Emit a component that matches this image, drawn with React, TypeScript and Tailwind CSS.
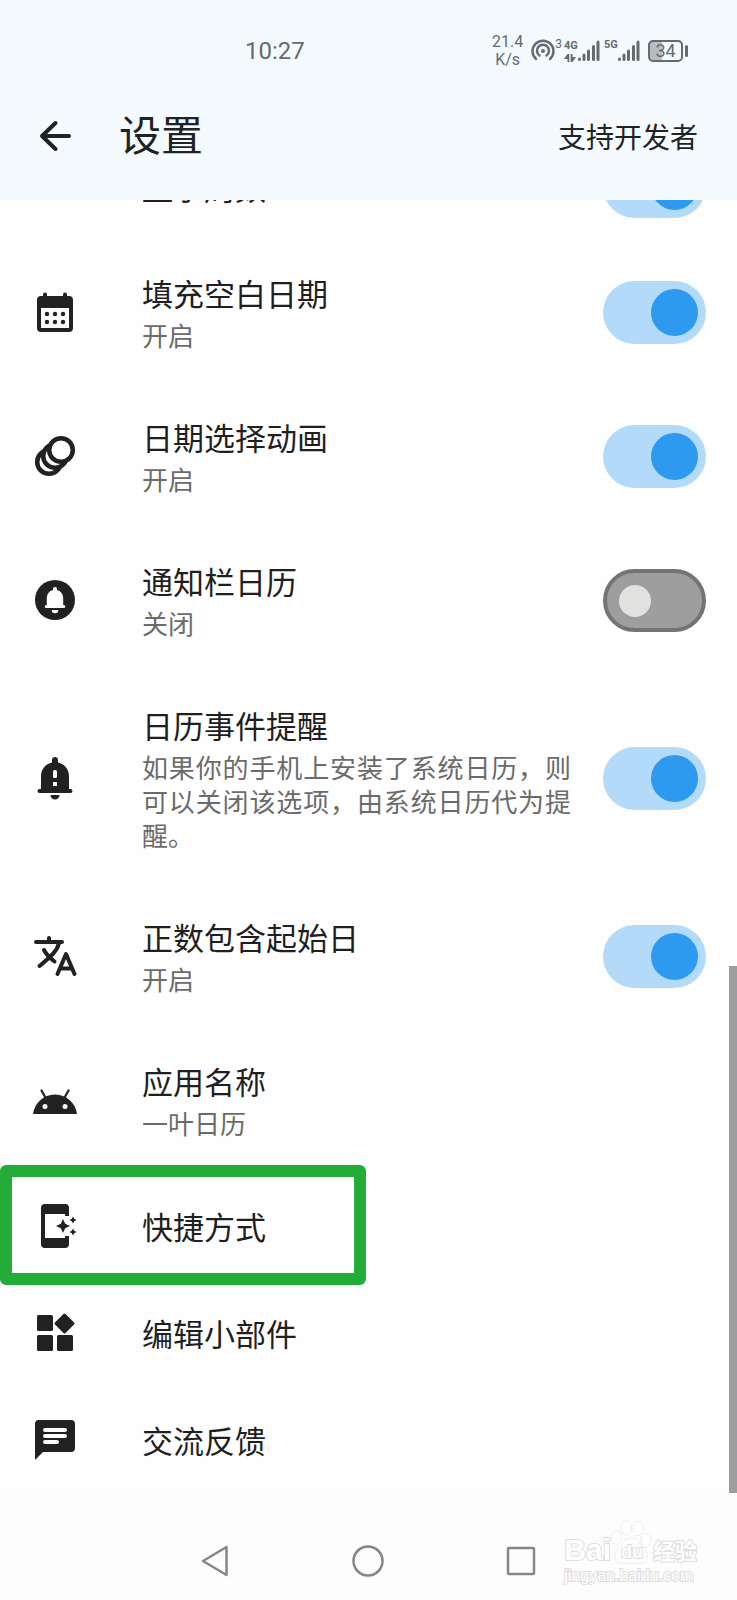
import type { ReactNode } from "react"

const Icon = ({ children }: { children: ReactNode }) => (
    <svg viewBox="0 0 48 48" className="size-12 shrink-0" fill="#212121" aria-hidden="true">{children}</svg>
)

const CalendarIcon = () => <Icon>
    <rect x="6" y="8" width="36" height="36" rx="4" />
    <path d="M14 6.500v4M34 6.500v4" stroke="#212121" strokeWidth="4" strokeLinecap="round" />
    <path d="M10 20h28v20H10z" fill="#fefefe" />
    {[16, 24, 32].map((x) => <g key={x}>
        <circle cx={x} cy="26" r="2.200" />
        <circle cx={x} cy="34" r="2.200" />
    </g>)}
</Icon>

const AnimationIcon = () => <Icon>
    <g fill="#fefefe" stroke="#212121" strokeWidth="4.500">
        <circle cx="18" cy="30" r="11.800" />
        <circle cx="24" cy="24" r="11.800" />
        <circle cx="30" cy="18" r="11.800" />
    </g>
</Icon>

const CircleBellIcon = () => <Icon>
    <circle cx="24" cy="24" r="20" />
    <path fill="#fefefe" d="M24 11c1.200 0 2 .8 2 2v.9c3.800.900 6.200 4.200 6.200 8.300V29h.6a1.500 1.500 0 0 1 0 3H15.200a1.500 1.500 0 0 1 0-3h.6v-6.800c0-4.100 2.400-7.400 6.200-8.300V13c0-1.200.8-2 2-2zM20.700 34h6.600a3.300 3.300 0 0 1-6.600 0z" />
</Icon>

const AlertBellIcon = () => <Icon>
    <path d="M24 3c1.700 0 3 1.300 3 3v2.400c6.500 1.300 11 6.900 11 13.600v13h1.500a2 2 0 0 1 0 4h-31a2 2 0 0 1 0-4H10V22c0-6.700 4.500-12.300 11-13.600V6c0-1.700 1.300-3 3-3zM19.500 41h9a4.500 4.500 0 0 1-9 0z" />
    <rect x="22" y="16" width="4" height="8" rx="1.500" fill="#fefefe" />
    <rect x="22" y="28" width="4" height="4" rx=".5" fill="#fefefe" />
</Icon>

const TranslateIcon = () => <Icon>
    <g fill="none" stroke="#212121" strokeWidth="4" strokeLinecap="round" strokeLinejoin="round">
        <path d="M5 10h26M18 6v4M28 11C26 20 18 26 8.500 34M13 18c2 4 6 8 10.500 11.500" />
        <path d="M26.500 42 35 22l8.500 20M29.500 36.500h11" />
    </g>
</Icon>

const AndroidIcon = () => <Icon>
    <path d="M2 38C3.500 27 12.500 18.500 24 18.500S44.500 27 46 38z" />
    <path d="m10.500 14.500 4.500 8M37.500 14.500l-4.500 8" stroke="#212121" strokeWidth="2.200" strokeLinecap="round" />
    <circle cx="14" cy="30.500" r="2.500" fill="#fefefe" />
    <circle cx="34" cy="30.500" r="2.500" fill="#fefefe" />
</Icon>

const ShortcutIcon = () => <Icon>
    <path d="M14 2h20a4 4 0 0 1 4 4v8h-4v-2H14v24h20v-2h4v8a4 4 0 0 1-4 4H14a4 4 0 0 1-4-4V6a4 4 0 0 1 4-4z" />
    <path d="m32 17 2.200 4.800L39 24l-4.800 2.200L32 31l-2.200-4.800L25 24l4.800-2.200z" />
    <path d="m42 14.500 1.200 2.300 2.300 1.200-2.300 1.200-1.200 2.300-1.200-2.300-2.300-1.200 2.300-1.200zM42 26.500l1.200 2.300 2.300 1.200-2.300 1.200-1.200 2.300-1.200-2.300-2.300-1.200 2.300-1.200z" />
</Icon>

const WidgetsIcon = () => <Icon>
    <rect x="6" y="6" width="16" height="16" rx="1.500" />
    <rect x="6" y="26" width="16" height="16" rx="1.500" />
    <rect x="26" y="26" width="16" height="16" rx="1.500" />
    <rect x="26" y="7" width="15" height="15" rx="1.500" transform="rotate(45 33.500 14.500)" />
</Icon>

const ChatIcon = () => <Icon>
    <path d="M8 4h32a4 4 0 0 1 4 4v24a4 4 0 0 1-4 4H12l-8 8V8a4 4 0 0 1 4-4z" />
    <path d="M14 14h20M14 20h20M14 26h12" stroke="#fefefe" strokeWidth="4" strokeLinecap="round" />
</Icon>

type Setting = { id: string; title: string; note?: string; on?: boolean; icon?: ReactNode; marked?: boolean }

const settings: Setting[] = [
    { id: "weeks", title: "显示周数", on: true },
    { id: "fill", title: "填充空白日期", note: "开启", on: true, icon: <CalendarIcon /> },
    { id: "animation", title: "日期选择动画", note: "开启", on: true, icon: <AnimationIcon /> },
    { id: "notification", title: "通知栏日历", note: "关闭", on: false, icon: <CircleBellIcon /> },
    { id: "reminder", title: "日历事件提醒", note: "如果你的手机上安装了系统日历，则可以关闭该选项，由系统日历代为提醒。", on: true, icon: <AlertBellIcon /> },
    { id: "start", title: "正数包含起始日", note: "开启", on: true, icon: <TranslateIcon /> },
    { id: "name", title: "应用名称", note: "一叶日历", icon: <AndroidIcon /> },
    { id: "shortcut", title: "快捷方式", icon: <ShortcutIcon />, marked: true },
    { id: "widgets", title: "编辑小部件", icon: <WidgetsIcon /> },
    { id: "feedback", title: "交流反馈", icon: <ChatIcon /> },
]

const Switch = ({ id, on }: { id: string; on: boolean }) => (
    <input
        id={id}
        type="checkbox"
        role="switch"
        defaultChecked={on}
        className="block h-[63px] w-[103px] shrink-0 appearance-none overflow-hidden rounded-full border-4 border-[#747477] bg-[#9e9e9e]
        before:mt-3 before:ml-3 before:block before:size-8 before:rounded-full before:bg-[#e1e1df]
        checked:border-0 checked:bg-[#b3dbf9] checked:before:mt-2 checked:before:ml-12 checked:before:size-[47px] checked:before:bg-[#2d9aef]"
    />
)

const Row = ({ id, title, note, on, icon, marked }: Setting) => {
    const size = note ? "py-7" : "h-[107px]"
    const body = <>
        {icon ?? <span className="size-12 shrink-0" />}
        <span className={`ml-[63px] block flex-1 ${note ? "pb-1" : ""}`}>
            <span className="block text-[31px] leading-[50px] text-[#1f1f1f]">{title}</span>
            {note && <span className="block text-justify text-[26px] leading-[34px] text-[#6b6b6b]">{note}</span>}
        </span>
    </>

    return <li className="relative">
        {on === undefined
            ? <button type="button" className={`flex w-full items-center px-[31px] text-left ${size}`}>{body}</button>
            : <div className={`flex items-center gap-8 px-[31px] ${size}`}>
                <label htmlFor={id} className="flex flex-1 items-center">{body}</label>
                <Switch id={id} on={on} />
            </div>}

        {/* Highlight drawn over the row */}
        {marked && <div className="pointer-events-none absolute -top-[7px] left-0 h-[120px] w-[366px] rounded-md border-12 border-[#24ac38]" />}
    </li>
}

const SignalBars = () => (
    <svg viewBox="0 0 22 22" className="h-[22px] w-[22px]" stroke="#666b6e" strokeWidth="3" strokeLinecap="round" aria-hidden="true">
        <path d="M1.500 19v.5M6 15v4.500M10.500 11v8.500M15.500 6.500v13M20 2v17.500" />
    </svg>
)

const StatusBar = () => (
    <div className="flex h-[71px] items-center bg-[#f3f9fd] pt-[30px] pr-[49px] pl-[245px] font-[Roboto,sans-serif] text-[#666b6e]">
        <time className="text-2xl leading-6">10:27</time>
        <div className="ml-auto flex items-center">
            <div className="mr-2 text-center text-base leading-[18px]">21.4<br />K/s</div>
            <svg viewBox="0 0 24 24" className="size-6" fill="none" stroke="#666b6e" strokeWidth="2.500" strokeLinecap="round" aria-hidden="true">
                <path d="M5 20a10.500 10.500 0 1 1 14 0M8.500 16.500a6 6 0 1 1 7 0" />
                <circle cx="12" cy="12" r="2" fill="#666b6e" stroke="none" />
            </svg>
            <span className="mb-3.5 text-xs leading-3">3</span>
            <div className="ml-0.5 flex h-[22px] w-3.5 flex-col justify-between">
                <span className="text-[11px] leading-[11px] font-bold">4G</span>
                <svg viewBox="0 0 12 8" className="h-2 w-3" fill="#666b6e" aria-hidden="true">
                    <path d="M3.500 0h1.800v8H3.500V5H0zM6.700 0h1.800v3H12L8.500 8H6.700z" />
                </svg>
            </div>
            <SignalBars />
            <span className="mb-3 ml-1 w-3.5 text-[11px] leading-[11px] font-bold">5G</span>
            <SignalBars />
            <div className="ml-2 flex items-center gap-0.5">
                <div className="flex h-[22px] w-[35px] items-center justify-center rounded-[5px] border-2 border-[#666b6e] bg-linear-to-r from-[#b9bdc0] from-40% to-transparent to-40% text-lg leading-[18px]">34</div>
                <div className="h-3 w-[3px] rounded-sm bg-[#666b6e]" />
            </div>
        </div>
    </div>
)

const Watermark = () => (
    <div className="absolute top-[27px] right-10 font-['Liberation_Sans','Noto_Sans_CJK_SC',sans-serif] font-bold text-[#fefefe] [-webkit-text-stroke:2px_#dedede] [paint-order:stroke_fill]">
        <div className="flex items-end">
            <span className="text-[30px] leading-7">Bai</span>
            <span className="relative flex h-11 w-[42px] items-end justify-center">
                <svg viewBox="0 0 42 44" className="absolute inset-0" fill="#fefefe" stroke="#dcdcdc" aria-hidden="true">
                    <ellipse cx="5.500" cy="17.500" rx="5" ry="6.500" />
                    <ellipse cx="15.500" cy="8" rx="5" ry="7" />
                    <ellipse cx="27" cy="8.500" rx="5" ry="7" />
                    <ellipse cx="35" cy="20.500" rx="5" ry="6.500" />
                    <path d="M20.500 18c5 0 7 4 9 7s6.500 6 6.500 11-3.500 8-8 7.500c-3-.4-12-.4-15 0C8.500 44 4 41 4 36s4.500-8 7-11 4.500-7 9.500-7z" />
                </svg>
                <span className="relative mb-0.5 text-lg leading-5">du</span>
            </span>
            <span className="text-[22px] leading-6">经验</span>
        </div>
        <div className="mt-0.5 text-base leading-5 font-normal">jingyan.baidu.com</div>
    </div>
)

const NavBar = () => (
    <nav className="relative bg-[#fdfdfd]">
        <div className="grid grid-cols-3 justify-items-center px-[19%] pt-[52px] pb-[23px]">
            <button type="button" aria-label="返回">
                <svg viewBox="0 0 32 32" className="size-8" fill="none" stroke="#868686" strokeWidth="2.500" strokeLinejoin="round"><path d="M3 16 26.500 2v28z" /></svg>
            </button>
            <button type="button" aria-label="主屏幕">
                <svg viewBox="0 0 32 32" className="size-8" fill="none" stroke="#868686" strokeWidth="2.500"><circle cx="16" cy="16" r="14.500" /></svg>
            </button>
            <button type="button" aria-label="最近任务">
                <svg viewBox="0 0 32 32" className="size-8" fill="none" stroke="#868686" strokeWidth="2.500"><rect x="3" y="3" width="26" height="26" rx="1" /></svg>
            </button>
        </div>
        <Watermark />
    </nav>
)

const App = () => (
    <div lang="zh-CN" className="bg-[#fefefe] font-['Noto_Sans_CJK_SC',sans-serif]">
        <header>
            <StatusBar />
            <div className="flex h-[129px] items-center bg-[#f4fafe] pr-[39px] pl-[31px] text-[#1f2324]">
                <button type="button" aria-label="返回" className="mr-10">
                    <svg viewBox="0 0 48 48" className="size-12" fill="none" stroke="#1f2324" strokeWidth="4" strokeLinecap="round" strokeLinejoin="round">
                        <path d="M38 24H11M24.500 11 11 24l13.500 13" />
                    </svg>
                </button>
                <h1 className="pb-1.5 text-[42px] leading-[50px]">设置</h1>
                <button type="button" className="ml-auto text-[28px] leading-[50px]">支持开发者</button>
            </div>
        </header>

        {/* Settings list, scrolled to its end */}
        <main className="relative overflow-hidden">
            <ul className="-mt-[67px]">
                {settings.map((item) => <Row key={item.id} {...item} />)}
            </ul>
            <div className="absolute right-0 bottom-0 h-[527px] w-2 bg-[#9e9ea0]" />
        </main>
        <NavBar />
    </div>
)

export default App
